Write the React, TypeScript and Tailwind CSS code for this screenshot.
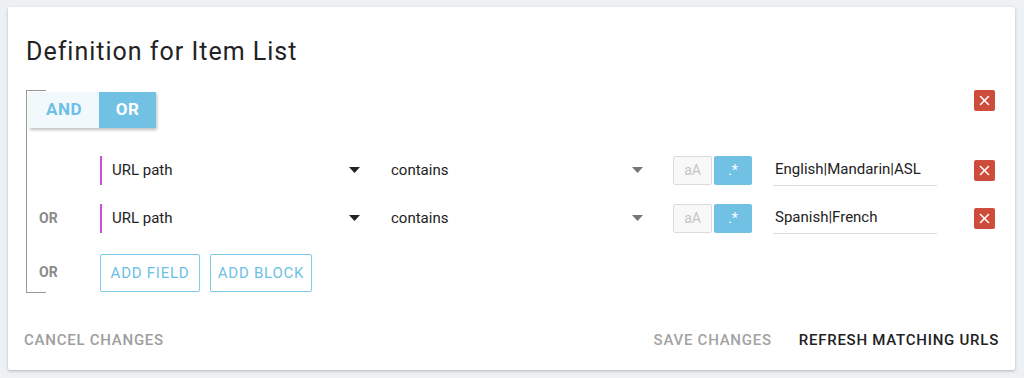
import React from "react";

function CloseButton() {
  return (
    <button className="flex h-[21px] w-[21px] items-center justify-center rounded-[2px] bg-[#cd4c3b]">
      <svg width="11" height="11" viewBox="0 0 11 11">
        <path d="M1.5 1.5 L9.5 9.5 M9.5 1.5 L1.5 9.5" stroke="#fff" strokeWidth="1.6" strokeLinecap="round" />
      </svg>
    </button>
  );
}

function Caret({ color }: { color: string }) {
  return (
    <svg width="11" height="6" viewBox="0 0 11 6">
      <path d="M0 0 H11 L5.5 6 Z" fill={color} />
    </svg>
  );
}

function ConditionRow({ label, value }: { label?: string; value: string }) {
  return (
    <div className="flex h-[48px] items-center">
      <div className="w-[73px] pl-[12px] text-[14px] font-bold text-[#8a8a8a]">{label}</div>
      {/* field select */}
      <div className="flex h-[29px] w-[270px] items-center justify-between border-l-2 border-[#c553cf] pl-[10px] pr-[10px]">
        <span className="text-[15px] text-[#222]">URL path</span>
        <Caret color="#222" />
      </div>
      {/* operator select */}
      <div className="ml-[11px] flex h-[29px] w-[272px] items-center justify-between pl-[10px] pr-[10px]">
        <span className="text-[15px] text-[#222]">contains</span>
        <Caret color="#777" />
      </div>
      <div className="ml-[20px] flex gap-[2px]">
        <button className="flex h-[29px] w-[39px] items-center justify-center rounded-[2px] border border-[#dcdcdc] bg-[#f8f8f8] text-[14px] text-[#c4c4c4]">
          aA
        </button>
        <button className="flex h-[29px] w-[38px] items-center justify-center rounded-[2px] bg-[#71c1e5] text-[14px] text-white">
          .*
        </button>
      </div>
      <div className="ml-[21px] flex h-[32px] w-[164px] items-center border-b border-[#dedede] pl-[2px] text-[15px] text-[#222]">
        {value}
      </div>
      <div className="ml-auto">
        <CloseButton />
      </div>
    </div>
  );
}

export default function App() {
  return (
    <div className="min-h-screen bg-[#eef1f4] pl-[8px] pt-[7px] font-['Roboto',sans-serif]">
      <div className="w-[1007px] rounded-[2px] bg-white px-[18px] pb-[12px] pt-[29px] shadow-[0_1px_3px_rgba(0,0,0,0.25)]">
        <h1 className="text-[25px] leading-[32px] tracking-[1px] text-[#222]">Definition for Item List</h1>

        <div className="mt-[22px] border-l border-[#9a9a9a]">
          <div className="h-px w-[19px] bg-[#9a9a9a]" />
          <div className="flex items-start justify-between pr-[2px]">
            <div className="ml-[2px] mt-[1px] flex h-[36px] shadow-[1px_2px_3px_rgba(0,0,0,0.25)]">
              <button className="w-[70px] bg-[#f2f9fd] text-[17px] font-bold tracking-[0.5px] text-[#6dbfe5]">AND</button>
              <button className="w-[57px] bg-[#71c1e5] text-[17px] font-bold tracking-[0.5px] text-white">OR</button>
            </div>
            <div className="-mt-px">
              <CloseButton />
            </div>
          </div>

          <div className="mt-[18px] pr-[2px]">
            <ConditionRow value="English|Mandarin|ASL" />
            <ConditionRow label="OR" value="Spanish|French" />
            <div className="flex h-[50px] items-end">
              <div className="mb-[9px] w-[73px] pl-[12px] text-[14px] font-bold text-[#8a8a8a]">OR</div>
              <div className="flex gap-[10px]">
                <button className="h-[38px] w-[100px] rounded-[2px] border border-[#7ecaea] text-[15px] tracking-[0.75px] text-[#6dbfe5]">
                  ADD FIELD
                </button>
                <button className="h-[38px] w-[102px] rounded-[2px] border border-[#7ecaea] text-[15px] tracking-[0.75px] text-[#6dbfe5]">
                  ADD BLOCK
                </button>
              </div>
            </div>
          </div>
          <div className="h-px w-[19px] bg-[#9a9a9a]" />
        </div>

        <div className="-mx-[2px] mt-[29px] flex h-[36px] items-center text-[15px] font-medium tracking-[0.75px]">
          <button className="text-[#9e9e9e]">CANCEL CHANGES</button>
          <button className="ml-auto text-[#a3a3a3]">SAVE CHANGES</button>
          <button className="ml-[27px] text-[#222]">REFRESH MATCHING URLS</button>
        </div>
      </div>
    </div>
  );
}
